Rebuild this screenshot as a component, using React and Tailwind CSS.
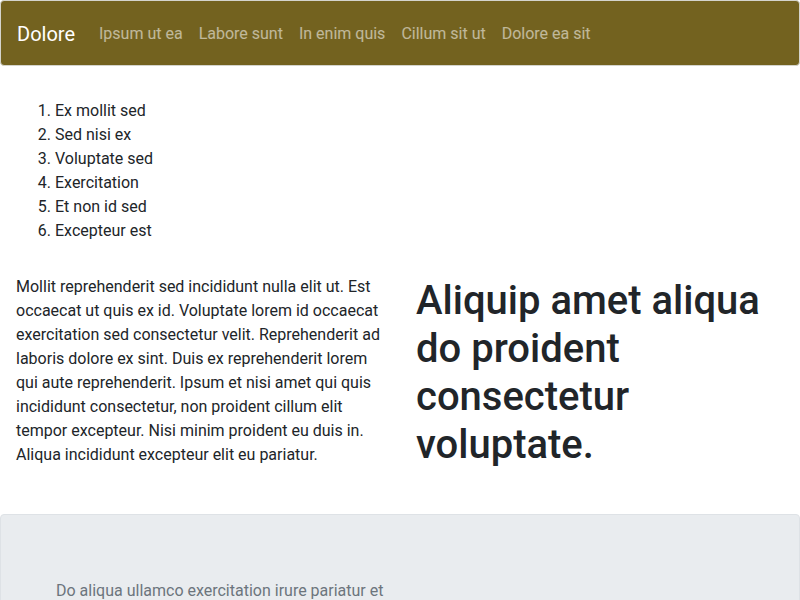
export default function App() {
    const links = ["Ipsum ut ea", "Labore sunt", "In enim quis", "Cillum sit ut", "Dolore ea sit"];
    const items = ["Ex mollit sed", "Sed nisi ex", "Voluptate sed", "Exercitation", "Et non id sed", "Excepteur est"];

    return (
        <div className="min-h-screen bg-white text-[#212529] font-['Segoe_UI',Roboto,'Liberation_Sans',sans-serif] text-base leading-6">

            {/* Navbar */}
            <nav className="flex items-center h-[66px] pt-[2px] px-4 bg-[#73621f] border border-[#d4d4cc] rounded-[4px]">
                <span className="mr-[16px] text-xl text-white">Dolore</span>
                {links.map((l) => (
                    <a key={l} className="px-2 text-white/55">
                        {l}
                    </a>
                ))}
            </nav>

            {/* List */}
            <ol className="mt-[33px] mb-8 pl-[55px] list-decimal">
                {items.map((i) => (
                    <li key={i}>{i}</li>
                ))}
            </ol>

            {/* Two columns */}
            <div className="grid grid-cols-2">
                <div className="px-4">
                    <p>
                        Mollit reprehenderit sed incididunt nulla elit ut. Est occaecat ut quis ex id. Voluptate lorem id
                        occaecat exercitation sed consectetur velit. Reprehenderit ad laboris dolore ex sint. Duis ex
                        reprehenderit lorem qui aute reprehenderit. Ipsum et nisi amet qui quis incididunt consectetur, non
                        proident cillum elit tempor excepteur. Nisi minim proident eu duis in. Aliqua incididunt excepteur
                        elit eu pariatur.
                    </p>
                </div>
                <div className="px-4">
                    <h1 className="mt-[2px] text-[40px] leading-[48px] font-medium">
                        Aliquip amet aliqua do proident consectetur voluptate.
                    </h1>
                </div>
            </div>

            {/* Jumbotron */}
            <section className="mt-[45px] pt-16 pb-16 pl-[55px] pr-8 bg-[#e9ecef] border border-[#dee2e6] rounded-[4px]">
                <p className="text-[#6c757d]">
                    Do aliqua ullamco exercitation irure pariatur et
                </p>
            </section>
        </div>
    );
}
